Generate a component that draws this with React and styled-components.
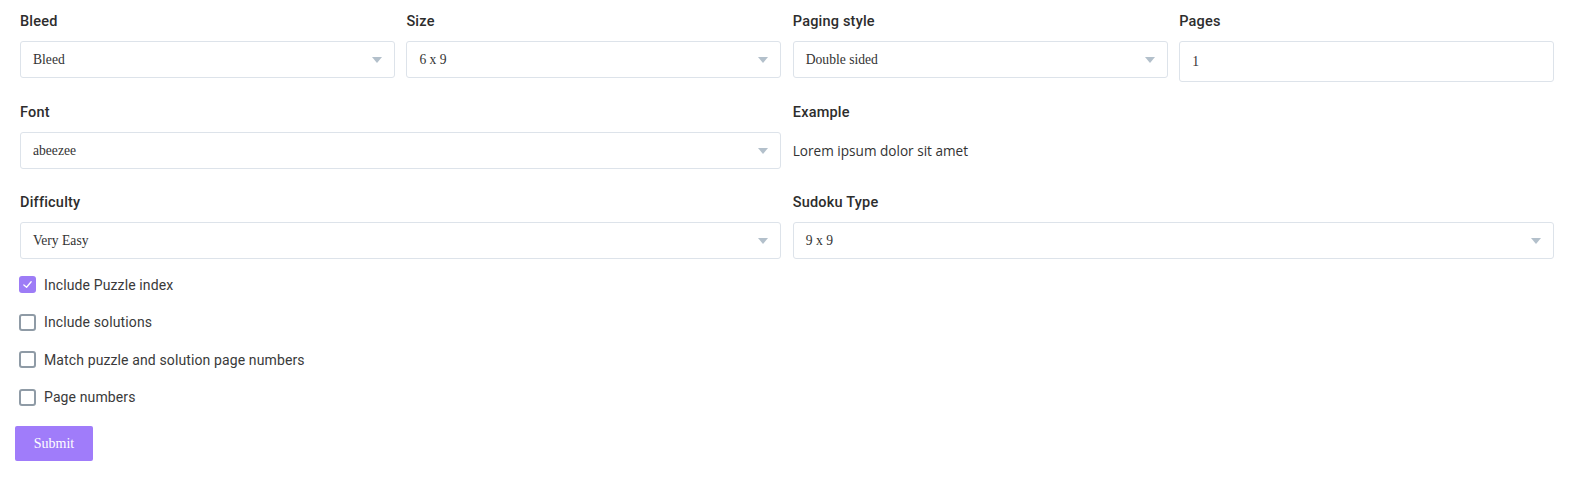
import React, { useState } from "react";
import styled, { createGlobalStyle } from "styled-components";

const GlobalStyle = createGlobalStyle`
  body {
    margin: 0;
    background: #fff;
    font-family: "Roboto", sans-serif;
    color: #333;
  }
`;

const Form = styled.form`
  width: 1534px;
  padding: 12px 0 0 20px;
`;

const Row = styled.div`
  display: grid;
  grid-template-columns: repeat(4, 1fr);
  column-gap: 11.5px;
  height: ${(p) => p.h || 90}px;
`;

const Field = styled.div`
  display: flex;
  flex-direction: column;
  grid-column: span ${(p) => p.span || 1};
`;

const Label = styled.label`
  font-family: "Roboto", sans-serif;
  font-weight: 500;
  font-size: 14.5px;
  letter-spacing: 0.2px;
  line-height: 20px;
  color: #2d2d2d;
  margin-bottom: 9px;
`;

const SelectBox = styled.div`
  position: relative;
  height: 37px;
  border: 1px solid #dde3ea;
  border-radius: 3px;
  box-sizing: border-box;
  display: flex;
  align-items: center;
  padding-left: 12px;
  font-family: "Liberation Serif", serif;
  font-size: 13.6px;
  color: #333;
`;

const Arrow = styled.span`
  position: absolute;
  right: 12px;
  top: 15px;
  width: 0;
  height: 0;
  border-left: 5.5px solid transparent;
  border-right: 5.5px solid transparent;
  border-top: 6px solid #b3c0cb;
`;

const Input = styled.input`
  height: 41px;
  border: 1px solid #dde3ea;
  border-radius: 3px;
  box-sizing: border-box;
  padding-left: 12px;
  font-family: "Liberation Serif", serif;
  font-size: 13.6px;
  color: #333;
  outline: none;
`;

const Sample = styled.div`
  height: 37px;
  display: flex;
  align-items: center;
  font-family: "Open Sans", sans-serif;
  font-size: 13.6px;
  color: #333;
`;

const Checks = styled.div`
  margin-top: 7px;
  display: flex;
  flex-direction: column;
`;

const CheckRow = styled.label`
  display: flex;
  align-items: center;
  height: 37.5px;
  gap: 8px;
  font-family: "Roboto", sans-serif;
  font-size: 14px;
  letter-spacing: 0.12px;
  color: #3a3a3a;
  cursor: pointer;
`;

const Box = styled.span`
  width: 17px;
  height: 17px;
  box-sizing: border-box;
  border-radius: 3px;
  margin-left: -1px;
  border: ${(p) => (p.checked ? "none" : "2px solid #8f9ba6")};
  background: ${(p) => (p.checked ? "#9d7cf6" : "#fff")};
  display: flex;
  align-items: center;
  justify-content: center;
`;

const Submit = styled.button`
  margin: 10px 0 0 -5px;
  width: 78px;
  height: 35px;
  border: none;
  border-radius: 2px;
  background: #a07cfa;
  color: #fff;
  font-family: "Liberation Serif", serif;
  font-size: 14px;
`;

const Select = ({ value }) => (
  <SelectBox>
    {value}
    <Arrow />
  </SelectBox>
);

const options = [
  { label: "Include Puzzle index", on: true },
  { label: "Include solutions", on: false },
  { label: "Match puzzle and solution page numbers", on: false },
  { label: "Page numbers", on: false },
];

export default function App() {
  const [checks, setChecks] = useState(options.map((o) => o.on));

  const toggle = (i) => {
    const next = [...checks];
    next[i] = !next[i];
    setChecks(next);
  };

  return (
    <>
      <GlobalStyle />
      <Form onSubmit={(e) => e.preventDefault()}>
        <Row h={91}>
          <Field>
            <Label>Bleed</Label>
            <Select value="Bleed" />
          </Field>
          <Field>
            <Label>Size</Label>
            <Select value="6 x 9" />
          </Field>
          <Field>
            <Label>Paging style</Label>
            <Select value="Double sided" />
          </Field>
          <Field>
            <Label>Pages</Label>
            <Input defaultValue="1" />
          </Field>
        </Row>
        <Row>
          <Field span={2}>
            <Label>Font</Label>
            <Select value="abeezee" />
          </Field>
          <Field span={2}>
            <Label>Example</Label>
            <Sample>Lorem ipsum dolor sit amet</Sample>
          </Field>
        </Row>
        <Row h={66}>
          <Field span={2}>
            <Label>Difficulty</Label>
            <Select value="Very Easy" />
          </Field>
          <Field span={2}>
            <Label>Sudoku Type</Label>
            <Select value="9 x 9" />
          </Field>
        </Row>
        <Checks>
          {options.map((o, i) => (
            <CheckRow key={o.label} onClick={() => toggle(i)}>
              <Box checked={checks[i]}>
                {checks[i] && (
                  <svg width="11" height="11" viewBox="0 0 12 12">
                    <path
                      d="M2 6.5 L5 9 L10 3"
                      fill="none"
                      stroke="#fff"
                      strokeWidth="1.4"
                      strokeLinecap="round"
                      strokeLinejoin="round"
                    />
                  </svg>
                )}
              </Box>
              {o.label}
            </CheckRow>
          ))}
        </Checks>
        <Submit type="submit">Submit</Submit>
      </Form>
    </>
  );
}
